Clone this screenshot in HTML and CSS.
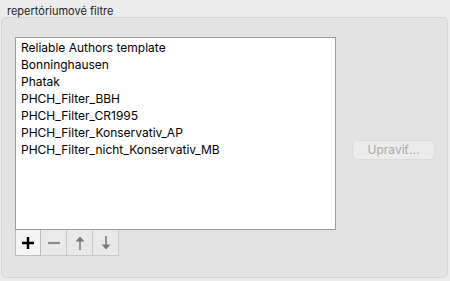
FILE: index.html
```html
<!DOCTYPE html>
<html lang="sk">
<head>
    <meta charset="UTF-8">
    <title>Repertóriumové filtre</title>
    <link rel="stylesheet" href="styles.css">
</head>
<body>
    <div class="title">repertóriumové filtre</div>
    <div class="group">
        <div class="list-area">
            <div class="list">
                <div class="row">Reliable Authors template</div>
                <div class="row">Bonninghausen</div>
                <div class="row">Phatak</div>
                <div class="row">PHCH_Filter_BBH</div>
                <div class="row">PHCH_Filter_CR1995</div>
                <div class="row">PHCH_Filter_Konservativ_AP</div>
                <div class="row">PHCH_Filter_nicht_Konservativ_MB</div>
            </div>
            <div class="tools">
                <button class="tool active">
                    <svg width="14" height="14" viewBox="0 0 14 14"><path d="M7 1v12M1 7h12" stroke="#000" stroke-width="2.4"/></svg>
                </button>
                <button class="tool">
                    <svg width="14" height="14" viewBox="0 0 14 14"><path d="M1 7h12" stroke="#8a8a8a" stroke-width="2.2"/></svg>
                </button>
                <button class="tool">
                    <svg width="14" height="16" viewBox="0 0 14 16"><path d="M7 3v12" stroke="#7a7a7a" stroke-width="1.6"/><path d="M2.5 6.5L7 1.5l4.5 5z" fill="#7a7a7a"/></svg>
                </button>
                <button class="tool">
                    <svg width="14" height="16" viewBox="0 0 14 16"><path d="M7 1v12" stroke="#7a7a7a" stroke-width="1.6"/><path d="M2.5 9.5L7 14.5l4.5-5z" fill="#7a7a7a"/></svg>
                </button>
            </div>
        </div>
        <div class="side">
            <button class="edit" disabled>Upraviť...</button>
        </div>
    </div>
</body>
</html>
```

FILE: styles.css
```css
body {
    margin: 0;
    width: 450px;
    height: 281px;
    background-color: #ececec;
    font-family: Inter, "Liberation Sans", Arial, sans-serif;
    color: #1a1a1a;
    overflow: hidden;
}
.title {
    font-size: 11px;
    padding: 4px 0 0 7px;
    height: 13px;
}
.group {
    margin: 0 2px 0 1px;
    height: 261px;
    box-sizing: border-box;
    background-color: #e3e3e3;
    border: 1px solid #d6d6d6;
    border-radius: 5px;
    display: flex;
    padding: 19px 0 0 13px;
}
.list-area {
    width: 321px;
}
.list {
    height: 193px;
    box-sizing: border-box;
    background-color: #fff;
    border: 1px solid #9c9c9c;
    padding: 1px 0 0 5px;
}
.row {
    font-size: 12px;
    line-height: 17px;
    color: #000;
}
.tools {
    display: flex;
}
.tool {
    width: 26px;
    height: 26px;
    margin: 0;
    padding: 0;
    box-sizing: border-box;
    background-color: #e9e9e9;
    border: 1px solid #c9c9c9;
    border-top: none;
    display: flex;
    align-items: center;
    justify-content: center;
}
.tool + .tool {
    border-left: none;
}
.tool.active {
    background-color: #f4f4f4;
    border-color: #bdbdbd;
}
.side {
    padding: 101px 0 0 16px;
}
.edit {
    width: 83px;
    height: 20px;
    padding: 0;
    border: 1px solid #dcdcdc;
    border-radius: 5px;
    background-color: #ececec;
    color: #a9a9a9;
    font-family: Inter, "Liberation Sans", Arial, sans-serif;
    font-size: 12px;
}
```
